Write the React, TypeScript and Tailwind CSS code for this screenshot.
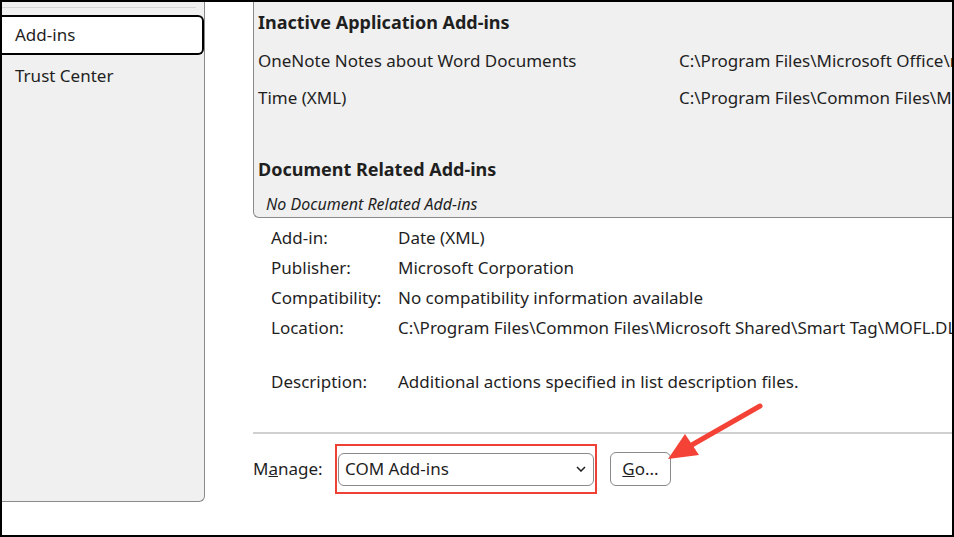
const font = { fontFamily: '"Noto Sans", "Open Sans", sans-serif' };

function Sidebar() {
  return (
    <div className="w-[203px] h-[500px] shrink-0 bg-[#f0f0f0] border-r border-b border-[#8a8a8a] rounded-br-md">
      <div className="mt-[5px] mr-[8px] h-px bg-[#d6d6d6]" />
      <div className="mt-[7px] h-[40px] border-2 border-l-0 border-black rounded-r-md bg-white flex items-center pl-[13px] text-[17px] text-[#1f1f1f]">
        Add-ins
      </div>
      <div className="h-[42px] flex items-center pl-[13px] text-[17px] text-[#1f1f1f]">Trust Center</div>
    </div>
  );
}

function AddinRow({ name, path }: { name: string; path: string }) {
  return (
    <div className="h-[37px] flex items-center whitespace-nowrap">
      <span className="w-[421px] shrink-0">{name}</span>
      <span>{path}</span>
    </div>
  );
}

const details: [string, string][] = [
  ['Add-in:', 'Date (XML)'],
  ['Publisher:', 'Microsoft Corporation'],
  ['Compatibility:', 'No compatibility information available'],
  ['Location:', 'C:\\Program Files\\Common Files\\Microsoft Shared\\Smart Tag\\MOFL.DLL'],
];

function Arrow() {
  return (
    <svg className="absolute left-0 top-0 pointer-events-none" width="954" height="537">
      <line x1="758" y1="404" x2="688" y2="444" stroke="#f44336" strokeWidth="5" strokeLinecap="round" />
      <polygon points="666,457 683,432 697,453" fill="#f44336" />
    </svg>
  );
}

export default function App() {
  return (
    <div className="relative w-[954px] h-[537px] border-2 border-black bg-white flex overflow-hidden text-[#1f1f1f]" style={font}>
      <Sidebar />
      <div className="flex-1 min-w-0 pl-[48px] flex flex-col overflow-hidden">
        <div className="h-[216px] shrink-0 bg-[#f0f0f0] border-l border-b border-[#8a8a8a] rounded-bl-md pl-[4px] text-[17px] overflow-hidden">
          <div className="h-[40px] flex items-center font-bold text-[18px]">Inactive Application Add-ins</div>
          <AddinRow name="OneNote Notes about Word Documents" path="C:\Program Files\Microsoft Office\root\Office16\ONBttnWD.dll" />
          <AddinRow name="Time (XML)" path="C:\Program Files\Common Files\Microsoft Shared\Smart Tag\MOFL.DLL" />
          <div className="h-[34px]" />
          <div className="h-[38px] flex items-center font-bold text-[18px]">Document Related Add-ins</div>
          <div className="h-[32px] flex items-center pl-[8px] italic text-[16px]">No Document Related Add-ins</div>
        </div>
        <div className="pt-[5px] pl-[18px] text-[17px]">
          {details.map(([k, v]) => (
            <div key={k} className="h-[30px] flex items-center whitespace-nowrap">
              <span className="w-[127px] shrink-0">{k}</span>
              <span>{v}</span>
            </div>
          ))}
          <div className="h-[24px]" />
          <div className="h-[30px] flex items-center whitespace-nowrap">
            <span className="w-[127px] shrink-0">Description:</span>
            <span>Additional actions specified in list description files.</span>
          </div>
        </div>
        <div className="mt-[35px] h-[2px] bg-[#d0d0d0]" />
        <div className="mt-[10px] flex items-center text-[17px]">
          <span className="w-[82px]">
            M<span className="underline">a</span>nage:
          </span>
          <div className="w-[262px] h-[50px] border-2 border-[#ee4035] flex items-center justify-center">
            <div className="w-[256px] h-[33px] border border-[#8a8a8a] rounded-md bg-white flex items-center justify-between pl-[6px] pr-[7px]">
              <span>COM Add-ins</span>
              <svg width="10" height="6" viewBox="0 0 10 6">
                <polyline points="1,1 5,5 9,1" fill="none" stroke="#1f1f1f" strokeWidth="1.5" />
              </svg>
            </div>
          </div>
          <div className="ml-[13px] w-[61px] h-[34px] border border-[#8a8a8a] rounded-md bg-white flex items-center justify-center">
            <span>
              <span className="underline">G</span>o...
            </span>
          </div>
        </div>
      </div>
      <Arrow />
    </div>
  );
}
